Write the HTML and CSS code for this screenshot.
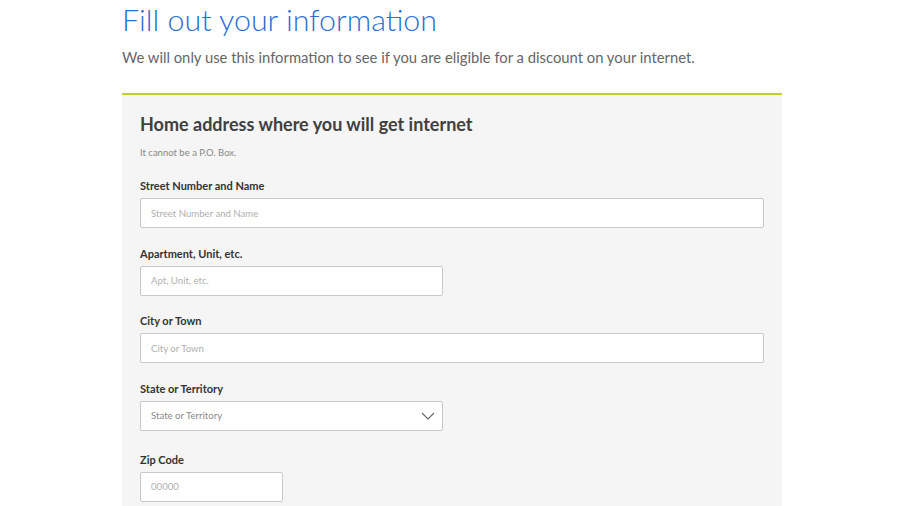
FILE: index.html
```html
<!DOCTYPE html>
<html lang="en">
<head>
<meta charset="utf-8">
<title>Fill out your information</title>
<link rel="stylesheet" href="styles.css">
</head>
<body>
<main class="page">
  <h1 class="title">Fill out your information</h1>
  <p class="intro">We will only use this information to see if you are eligible for a discount on your internet.</p>
  <section class="panel">
    <h2 class="panel-title">Home address where you will get internet</h2>
    <p class="note">It cannot be a P.O. Box.</p>
    <div class="field">
      <label class="label" for="street">Street Number and Name</label>
      <input class="input input-full" id="street" type="text" placeholder="Street Number and Name">
    </div>
    <div class="field">
      <label class="label" for="apt">Apartment, Unit, etc.</label>
      <input class="input input-half" id="apt" type="text" placeholder="Apt, Unit, etc.">
    </div>
    <div class="field">
      <label class="label" for="city">City or Town</label>
      <input class="input input-full" id="city" type="text" placeholder="City or Town">
    </div>
    <div class="field">
      <label class="label" for="state">State or Territory</label>
      <div class="select input-half" id="state">
        <span class="select-text">State or Territory</span>
        <svg class="chevron" width="14" height="8" viewBox="0 0 14 8"><path d="M1 1 L7 7 L13 1" fill="none" stroke="#666" stroke-width="1.1"/></svg>
      </div>
    </div>
    <div class="field field-zip">
      <label class="label" for="zip">Zip Code</label>
      <input class="input input-zip" id="zip" type="text" placeholder="00000">
    </div>
  </section>
</main>
</body>
</html>
```
FILE: styles.css
```css
* { box-sizing: border-box; }
html, body { margin: 0; padding: 0; background: #fff; }
body { font-family: Lato, "Source Sans Pro", "Liberation Sans", sans-serif; color: #333; overflow: hidden; }
.page { width: 660px; margin-left: 122px; }
.title {
  margin: 0;
  padding-top: 0;
  font-size: 30.4px;
  font-weight: 300;
  line-height: 38px;
  color: #2a6fd6;
}
.intro {
  margin: 9px 0 0 0;
  font-size: 14.8px;
  line-height: 20px;
  font-weight: 400;
  color: #666;
}
.panel {
  margin-top: 26px;
  border-top: 2px solid #c5cd2e;
  background: #f5f5f5;
  padding: 18px 18px 10px 18px;
  min-height: 420px;
}
.panel-title {
  margin: 0;
  font-size: 18px;
  font-weight: 700;
  line-height: 22px;
  color: #404040;
}
.note {
  margin: 11px 0 0 0;
  font-size: 9.5px;
  line-height: 14px;
  color: #888;
}
.field { display: flex; flex-direction: column; align-items: flex-start; margin-top: 19px; }
.field + .field { margin-top: 18.6px; }
.field.field-zip { margin-top: 22px; }
.label {
  font-size: 11px;
  font-weight: 700;
  line-height: 14px;
  color: #333;
  margin-bottom: 5px;
}
.input, .select {
  height: 30px;
  border: 1px solid #c8c8c8;
  border-radius: 2px;
  background: #fff;
  padding: 0 10px;
  font-family: inherit;
  font-size: 9.6px;
  color: #333;
  outline: none;
}
.input::placeholder { color: #b0b0b0; }
.input-full { width: 624px; }
.input-half { width: 303px; }
.input-zip { width: 143px; }
.select { display: flex; align-items: center; justify-content: space-between; }
.select-text { color: #8a8a8a; font-size: 9.6px; }
.chevron { margin-right: -3px; }
```
